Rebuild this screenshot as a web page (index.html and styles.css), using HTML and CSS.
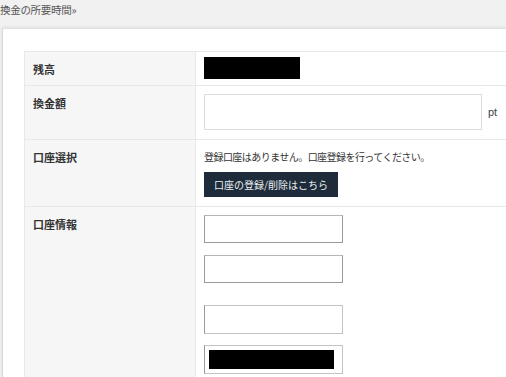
FILE: index.html
```html
<!DOCTYPE html>
<html lang="ja">
<head>
<meta charset="utf-8">
<link rel="stylesheet" href="styles.css">
</head>
<body>
<div class="crumb">換金の所要時間»</div>
<div class="panel">
  <table class="form">
    <tr class="r1">
      <th>残高</th>
      <td><span class="mask mask-balance"></span></td>
    </tr>
    <tr class="r2">
      <th>換金額</th>
      <td><div class="amount"><input class="amount-input" type="text"><span class="unit">pt</span></div></td>
    </tr>
    <tr class="r3">
      <th>口座選択</th>
      <td>
        <p class="note">登録口座はありません。口座登録を行ってください。</p>
        <button class="btn" type="button">口座の登録/削除はこちら</button>
      </td>
    </tr>
    <tr class="r4">
      <th>口座情報</th>
      <td>
        <div class="fields">
          <input class="field" type="text">
          <input class="field" type="text">
          <input class="field field-gap light" type="text">
          <div class="field light filled"><span class="mask mask-field"></span></div>
        </div>
      </td>
    </tr>
  </table>
</div>
</body>
</html>
```
FILE: styles.css
```css
html, body {
  margin: 0;
  padding: 0;
  overflow: hidden;
}
body {
  background: #f1f1f1;
  font-family: "Noto Sans CJK JP", "Noto Sans", sans-serif;
  color: #333;
  width: 506px;
  height: 377px;
}
.crumb {
  height: 28px;
  box-sizing: border-box;
  padding: 3px 0 0 0;
  font-size: 10.5px;
  line-height: 14px;
  color: #555;
  letter-spacing: -0.3px;
}
.panel {
  margin-left: 2px;
  width: 504px;
  height: 349px;
  overflow: hidden;
  background: #fff;
  border-top: 1px solid #e2e2e2;
  border-left: 1px solid #d8d8d8;
  box-shadow: 0 -1px 3px rgba(0,0,0,0.08);
  padding: 22px 0 0 21px;
  box-sizing: border-box;
}
.form {
  border-collapse: collapse;
  width: 500px;
  table-layout: fixed;
}
.form th, .form td {
  border: 1px solid #e8e8e8;
  vertical-align: top;
  text-align: left;
}
.form th {
  width: 171px;
  background: #f6f6f6;
  font-size: 11px;
  line-height: 14px;
  font-weight: bold;
  padding: 10px 8px 0 8px;
  box-sizing: border-box;
}
.form td {
  background: #fff;
  padding: 0 0 0 8px;
}
.r1 th, .r1 td { height: 34px; box-sizing: border-box; }
.r1 td { padding-top: 5px; }
.mask {
  display: block;
  background: #000;
}
.mask-balance {
  width: 96px;
  height: 22px;
}
.r2 th, .r2 td { height: 54px; box-sizing: border-box; }
.r2 td { padding-top: 8px; }
.amount {
  display: flex;
  align-items: center;
  gap: 6px;
}
.amount-input {
  width: 278px;
  height: 36px;
  box-sizing: border-box;
  border: 1px solid #dcdcdc;
  margin: 0;
  padding: 0;
}
.unit {
  font-size: 11px;
  color: #444;
  font-family: "Liberation Sans", sans-serif;
}
.r3 th, .r3 td { height: 67px; box-sizing: border-box; }
.r3 td { padding-top: 10px; }
.note {
  margin: 0;
  font-size: 10px;
  line-height: 14px;
  letter-spacing: -0.55px;
  color: #333;
}
.btn {
  margin-top: 8px;
  width: 134px;
  height: 25px;
  border: 0;
  background: #1d2b3b;
  color: #eef0f2;
  font-family: "Noto Sans CJK JP", sans-serif;
  font-size: 10px;
  padding: 0;
  display: block;
}
.r4 th, .r4 td { height: 180px; box-sizing: border-box; }
.r4 td { padding-top: 8px; }
.fields {
  display: flex;
  flex-direction: column;
  gap: 12px;
  align-items: flex-start;
}
.field {
  width: 139px;
  height: 28px;
  box-sizing: border-box;
  margin: 0;
  padding: 0;
  border: 1px solid #9a9a9a;
  border-top-color: #b5b5b5;
  background: #fff;
}
.field.light {
  height: 29px;
  border-color: #c4c4c4;
  border-left-color: #9a9a9a;
}
.field-gap {
  margin-top: 10px;
}
.filled {
  margin-top: -1px;
  padding: 4px 0 0 4px;
}
.mask-field {
  width: 125px;
  height: 19px;
}
```
